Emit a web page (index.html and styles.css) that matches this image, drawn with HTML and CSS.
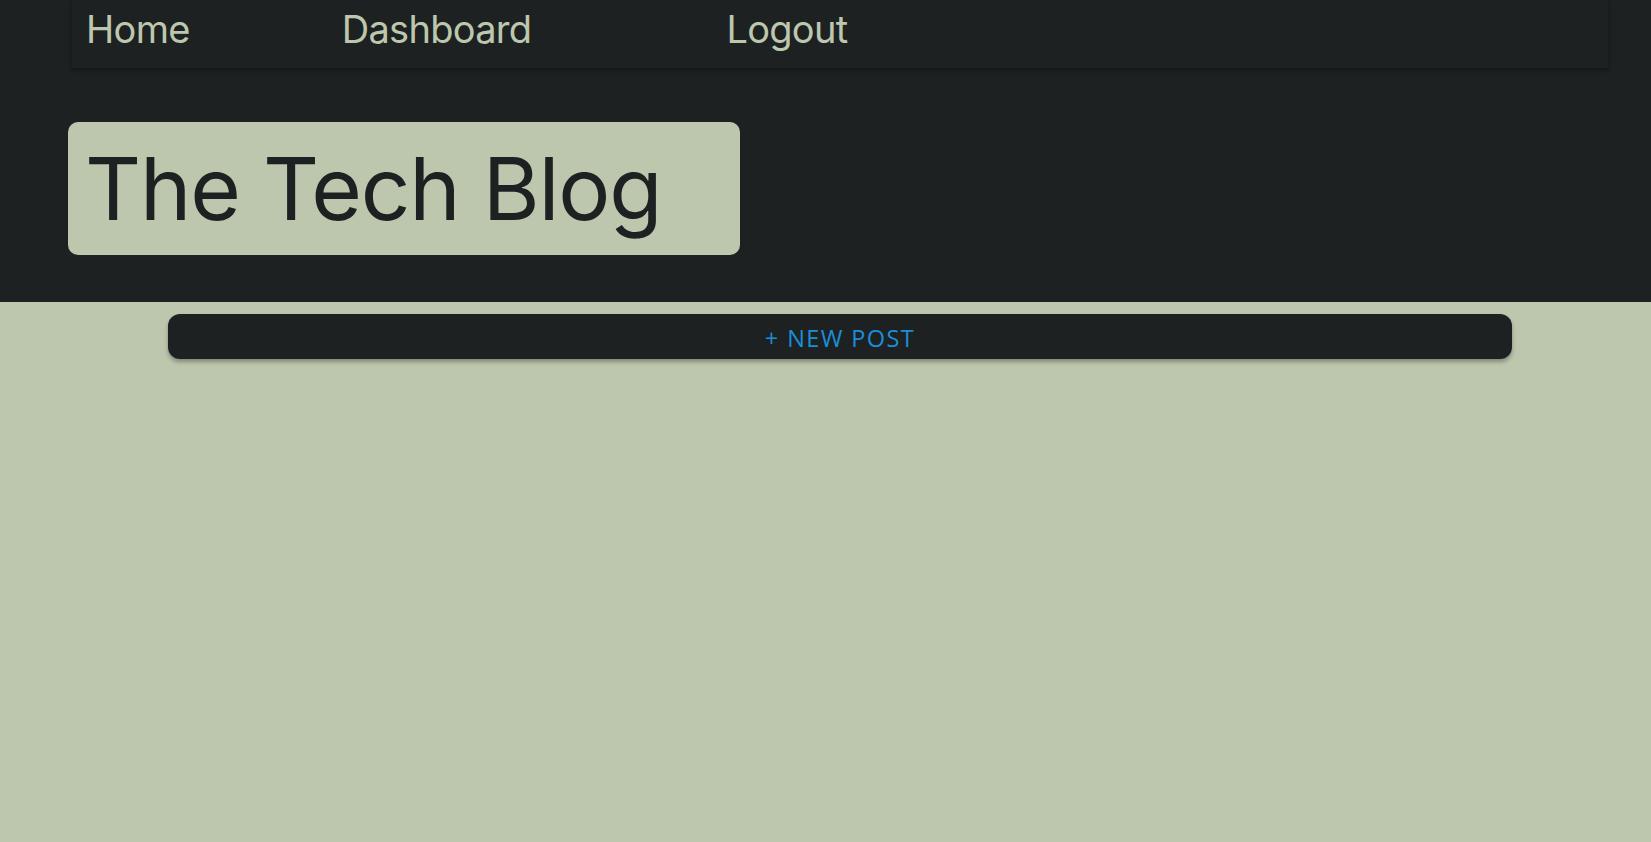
FILE: index.html
```html
<!DOCTYPE html>
<html lang="en">
<head>
<meta charset="utf-8">
<title>The Tech Blog</title>
<link rel="stylesheet" href="styles.css">
</head>
<body>
<header class="site-header">
  <nav class="nav">
    <a class="nav-link nav-home" href="#">Home</a>
    <a class="nav-link nav-dash" href="#">Dashboard</a>
    <a class="nav-link nav-logout" href="#">Logout</a>
  </nav>
  <div class="title-box">
    <h1 class="title">The Tech Blog</h1>
  </div>
</header>
<main class="main">
  <button class="new-post">+ NEW POST</button>
</main>
</body>
</html>
```
FILE: styles.css
```css
html, body {
  margin: 0;
  padding: 0;
}
body {
  background: #bcc7ad;
  min-height: 842px;
  font-family: Inter, "Noto Sans", sans-serif;
}
.site-header {
  background: #1d2122;
  height: 302px;
  display: flex;
  flex-direction: column;
}
.nav {
  margin-left: 72px;
  width: 1536px;
  height: 68px;
  box-sizing: border-box;
  padding-left: 14px;
  display: flex;
  align-items: flex-start;
  background: #1d2122;
  box-shadow: 0 2px 4px rgba(0, 0, 0, 0.35);
}
.nav-link {
  color: #bcc7ad;
  text-decoration: none;
  font-family: Inter, "Noto Sans", sans-serif;
  font-size: 38px;
  line-height: 58px;
  letter-spacing: -0.7px;
}
.nav-dash {
  margin-left: 152px;
}
.nav-logout {
  margin-left: 195px;
}
.title-box {
  margin: 54px 0 0 68px;
  width: 672px;
  height: 133px;
  background: #bcc7ad;
  border-radius: 10px;
  box-sizing: border-box;
  padding-left: 17px;
}
.title {
  margin: 0;
  font-family: Inter, "Noto Sans", sans-serif;
  font-weight: 400;
  font-size: 87px;
  line-height: 133px;
  color: #1d2122;
  letter-spacing: -1.2px;
}
.main {
  padding: 12px 139px 0 168px;
}
.new-post {
  display: block;
  width: 100%;
  height: 45px;
  border: none;
  border-radius: 12px;
  background: #1d2122;
  color: #1a8fd9;
  font-family: "Open Sans", "Noto Sans", sans-serif;
  font-size: 23.5px;
  letter-spacing: 1.4px;
  box-shadow: 0 3px 4px rgba(0, 0, 0, 0.3);
  padding: 3px 0 0;
  cursor: pointer;
}
```
